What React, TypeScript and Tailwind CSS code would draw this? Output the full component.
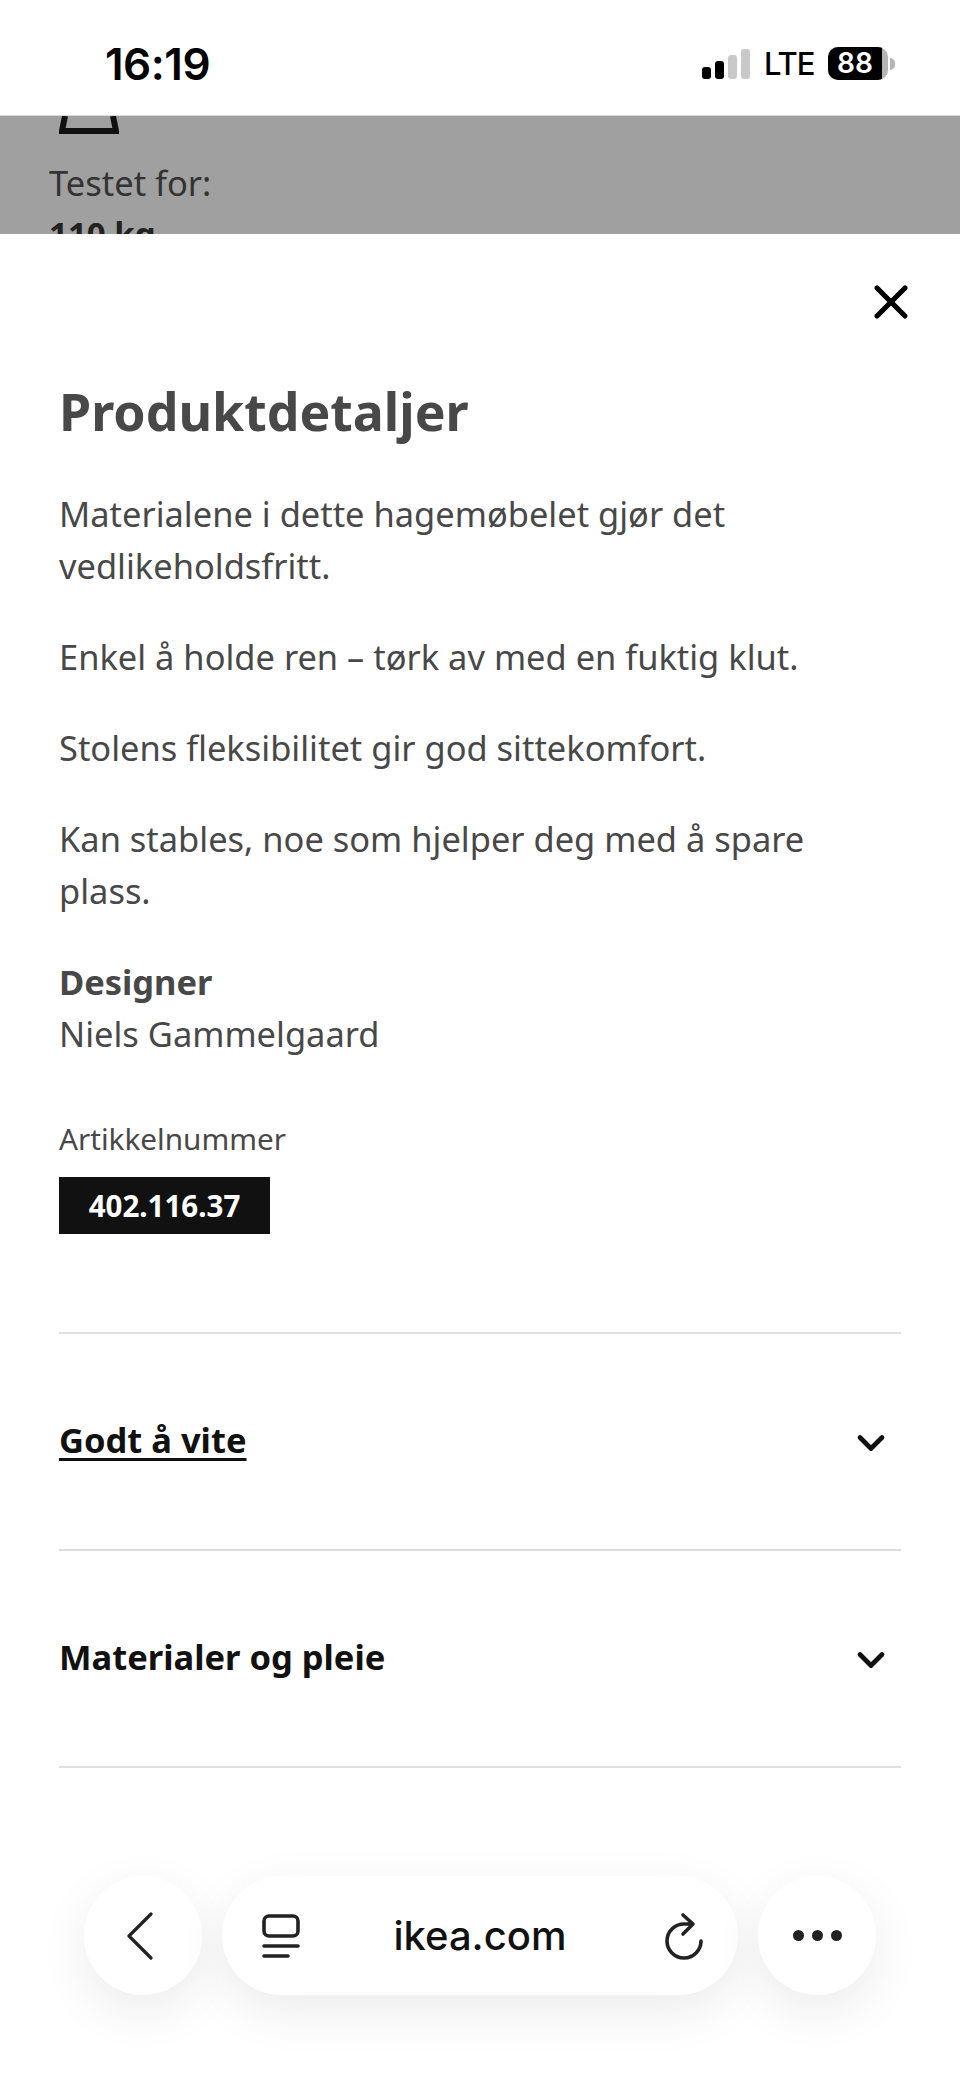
import { ChevronDown, X } from 'lucide-react'

const font = 'font-["Noto_Sans",sans-serif]'

function StatusBar() {
  return (
    <div className="h-[116px] bg-white flex items-start justify-between pl-[105px] pr-[65px] border-b border-[#d8d8d8]">
      <span className='mt-[41px] text-[44px] leading-[46px] font-semibold text-black font-["Inter",sans-serif] tracking-[-0.5px]'>16:19</span>
      <div className="flex items-center mt-[47px] h-[33px]">
        <div className="flex items-end gap-[4px] h-[30px]">
          <span className="w-[9px] h-[12px] rounded-[3px] bg-black" />
          <span className="w-[9px] h-[18px] rounded-[3px] bg-black" />
          <span className="w-[9px] h-[24px] rounded-[3px] bg-[#c9c9c9]" />
          <span className="w-[9px] h-[30px] rounded-[3px] bg-[#c9c9c9]" />
        </div>
        <span className='ml-[14px] w-[49px] text-[31px] leading-[34px] font-medium text-black font-["Inter",sans-serif] tracking-[-1px] whitespace-nowrap'>LTE</span>
        <div className="ml-[15px] flex items-center">
          <div className="w-[60px] h-[33px] rounded-[10px] overflow-hidden bg-[#b5b5b5] flex">
            <span className='w-[54px] bg-black text-white text-[28px] leading-[33px] font-semibold text-center font-["Inter",sans-serif] whitespace-nowrap'>88</span>
          </div>
          <span className="w-[5px] h-[12px] ml-[2px] rounded-r-full bg-[#b5b5b5]" />
        </div>
      </div>
    </div>
  )
}

function Row({ title, underline }: { title: string; underline?: boolean }) {
  return (
    <div className="h-[217px] border-b-2 border-[#dfdfdf] flex items-center justify-between pr-[8px]">
      <span className={`-mt-[3px] text-[34.5px] font-bold text-[#111111] ${underline ? 'underline decoration-[3px] underline-offset-[5px]' : ''}`}>{title}</span>
      <ChevronDown className="mt-[2px] w-[44px] h-[44px] text-[#111111]" strokeWidth={2.6} />
    </div>
  )
}

export default function App() {
  return (
    <div className={`relative w-[960px] h-[2078px] overflow-hidden bg-white ${font}`}>
      <StatusBar />

      {/* Dimmed page behind the sheet */}
      <div className="h-[118px] bg-[#a0a0a0] overflow-hidden pl-[49px]">
        <svg width="60" height="18" viewBox="0 0 60 18" fill="none" stroke="#111111" strokeWidth="6" className="ml-[10px]">
          <path d="M6 0 L3 15 H57 L54 0" />
        </svg>
        <p className="mt-[23px] text-[34.5px] leading-[52px] text-[#333333]">Testet for:</p>
        <p className="-mt-[1px] text-[33px] leading-[52px] font-bold text-[#222222]">110 kg</p>
      </div>

      {/* Sheet */}
      <div className="bg-white rounded-t-[20px] px-[59px] h-[1844px]">
        <div className="flex justify-end pt-[40px]">
          <X className="w-[56px] h-[56px] -mr-[18px] text-black" strokeWidth={2.2} />
        </div>
        <h1 className="mt-[47px] text-[51.8px] leading-[68px] font-bold text-[#484848]">Produktdetaljer</h1>
        <div className="mt-[43px] text-[34.45px] leading-[52px] text-[#484848]">
          <p>Materialene i dette hagemøbelet gjør det vedlikeholdsfritt.</p>
          <p className="mt-[39px]">Enkel å holde ren – tørk av med en fuktig klut.</p>
          <p className="mt-[39px]">Stolens fleksibilitet gir god sittekomfort.</p>
          <p className="mt-[39px]">Kan stables, noe som hjelper deg med å spare plass.</p>
          <p className="mt-[39px] font-bold">Designer</p>
          <p>Niels Gammelgaard</p>
        </div>
        <p className="mt-[59px] text-[29.7px] leading-[40px] text-[#484848]">Artikkelnummer</p>
        <div className="mt-[18px] w-[211px] h-[57px] bg-[#111111] text-white text-[29.5px] font-bold flex items-center justify-center pt-[2px]">402.116.37</div>
        <div className="mt-[98px] border-t-2 border-[#dfdfdf]" />
        <Row title="Godt å vite" underline />
        <Row title="Materialer og pleie" />
      </div>

      {/* Browser toolbar */}
      <div className="absolute left-[84px] top-[1876px] flex gap-[20px] text-[#111111]">
        <div className="w-[118px] h-[119px] rounded-full bg-white shadow-[0_16px_50px_rgba(0,0,0,0.08)] flex items-center justify-center">
          <svg width="30" height="48" viewBox="0 0 30 48" fill="none" stroke="#222" strokeWidth="3.2" strokeLinecap="round" strokeLinejoin="round" className="-ml-[9px]">
            <path d="M27 2 L5 24 L27 46" />
          </svg>
        </div>
        <div className="w-[516px] h-[119px] rounded-full bg-white shadow-[0_16px_50px_rgba(0,0,0,0.08)] flex items-center justify-between pl-[40px] pr-[32px]">
          <svg width="38" height="44" viewBox="0 0 38 44" fill="none" stroke="#222" strokeWidth="3.6" strokeLinecap="round">
            <rect x="2" y="2" width="34" height="20" rx="5" />
            <path d="M2 32 H36 M2 42 H26" />
          </svg>
          <span className='text-[40px] leading-[50px] font-medium font-["Inter",sans-serif] text-[#111111]'>ikea.com</span>
          <svg width="46" height="50" viewBox="0 0 46 50" fill="none" stroke="#222" strokeWidth="3.6" strokeLinecap="round" strokeLinejoin="round">
            <path d="M33 13 H24 A17 17 0 1 0 41 30 M23 4 L33 13 L23 23" />
          </svg>
        </div>
        <div className="w-[118px] h-[119px] rounded-full bg-white shadow-[0_16px_50px_rgba(0,0,0,0.08)] flex items-center justify-center gap-[8px]">
          <span className="w-[11px] h-[11px] rounded-full bg-[#222222]" />
          <span className="w-[11px] h-[11px] rounded-full bg-[#222222]" />
          <span className="w-[11px] h-[11px] rounded-full bg-[#222222]" />
        </div>
      </div>
    </div>
  )
}
